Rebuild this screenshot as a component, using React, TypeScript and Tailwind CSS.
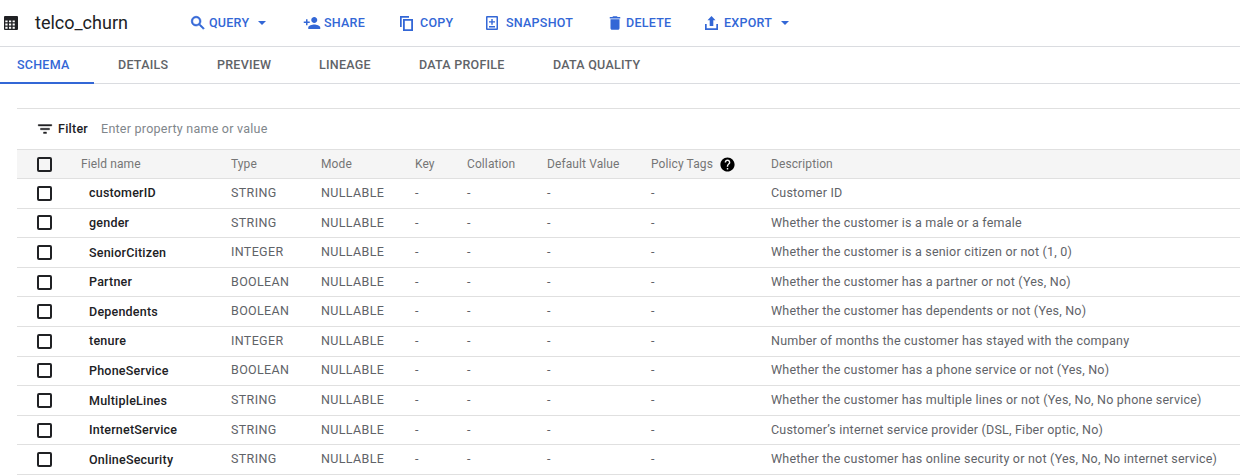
import React from "react";
import { MdPersonAdd, MdDelete, MdHelp } from "react-icons/md";

const font = { fontFamily: "Roboto, sans-serif" };

const rows = [
  ["customerID", "STRING", "Customer ID"],
  ["gender", "STRING", "Whether the customer is a male or a female"],
  ["SeniorCitizen", "INTEGER", "Whether the customer is a senior citizen or not (1, 0)"],
  ["Partner", "BOOLEAN", "Whether the customer has a partner or not (Yes, No)"],
  ["Dependents", "BOOLEAN", "Whether the customer has dependents or not (Yes, No)"],
  ["tenure", "INTEGER", "Number of months the customer has stayed with the company"],
  ["PhoneService", "BOOLEAN", "Whether the customer has a phone service or not (Yes, No)"],
  ["MultipleLines", "STRING", "Whether the customer has multiple lines or not (Yes, No, No phone service)"],
  ["InternetService", "STRING", "Customer’s internet service provider (DSL, Fiber optic, No)"],
  ["OnlineSecurity", "STRING", "Whether the customer has online security or not (Yes, No, No internet service)"],
];

const grid = "grid grid-cols-[64px_150px_90px_94px_52px_80px_104px_120px_1fr] items-center";

function Check() {
  return <span className="ml-5 block h-[15px] w-[15px] rounded-[2px] border-2 border-[#202124]" />;
}

function TableIcon() {
  return (
    <svg width="14" height="14" viewBox="0 0 14 14" fill="#202124">
      <path d="M1 0h12a1 1 0 0 1 1 1v12a1 1 0 0 1-1 1H1a1 1 0 0 1-1-1V1a1 1 0 0 1 1-1Zm.3 4.4v1.9h2.3V4.4Zm3.700 0v1.900h2.200V4.400Zm3.600 0v1.900h2.200V4.400ZM1.300 7.600v1.900h2.300V7.600Zm3.700 0v1.900h2.200V7.600Zm3.600 0v1.900h2.200V7.600ZM1.300 10.800v1.900h2.300v-1.900Zm3.700 0v1.900h2.200v-1.900Zm3.600 0v1.900h2.200v-1.900Z" fillRule="evenodd" />
    </svg>
  );
}

function SearchIcon() {
  return (
    <svg width="18" height="18" viewBox="0 0 24 24" fill="#3367d6" stroke="#3367d6" strokeWidth="0.8">
      <path d="M15.5 14h-.79l-.28-.27C15.41 12.59 16 11.11 16 9.5 16 5.91 13.09 3 9.5 3S3 5.91 3 9.5 5.91 16 9.5 16c1.61 0 3.09-.59 4.23-1.57l.27.28v.79l5 4.99L20.49 19l-4.99-5zm-6 0C7.01 14 5 11.99 5 9.5S7.01 5 9.5 5 14 7.01 14 9.5 11.99 14 9.5 14z" />
    </svg>
  );
}

function FilterIcon() {
  return (
    <svg width="18" height="18" viewBox="0 0 24 24" fill="#202124" stroke="#202124" strokeWidth="0.5">
      <path d="M10 18h4v-2h-4v2zM3 6v2h18V6H3zm3 7h12v-2H6v2z" />
    </svg>
  );
}

function Caret({ className }: { className: string }) {
  return (
    <svg width="8" height="4" viewBox="0 0 8 4" fill="currentColor" className={className}>
      <path d="M0 0h8L4 4Z" />
    </svg>
  );
}

function CopyIcon() {
  return (
    <svg width="13" height="15" viewBox="0 0 13 15" fill="#3367d6">
      <path d="M0 0h9v1.700H1.700V11H0Z" />
      <path fillRule="evenodd" d="M3 3h10v12H3Zm1.800 1.800v8.400h6.400V4.800Z" />
    </svg>
  );
}

function SnapshotIcon() {
  return (
    <svg width="12" height="14" viewBox="0 0 12 14" fill="#3367d6">
      <path fillRule="evenodd" d="M1 0h10a1 1 0 0 1 1 1v12a1 1 0 0 1-1 1H1a1 1 0 0 1-1-1V1a1 1 0 0 1 1-1Zm.5 1.500v11h9v-11Z" />
      <path d="M5.300 3h1.400v2.200H9v1.300H6.700v2.200H5.300V6.500H3V5.200h2.300ZM3 10h6v1.400H3Z" />
    </svg>
  );
}

function ExportIcon() {
  return (
    <svg width="13" height="14" viewBox="0 0 13 14" fill="#3367d6">
      <path d="M6.500 0l4 4.200H8.300V10H4.700V4.200H2.500ZM0 8h1.700v4.300h9.600V8H13v6H0Z" />
    </svg>
  );
}

function Action({ icon, label, caret, gap = "gap-[6px]" }: { icon: React.ReactNode; label: string; caret?: React.ReactNode; gap?: string }) {
  return (
    <div className={`flex items-center ${gap} text-[12.5px] font-medium tracking-[0.25px] text-[#3367d6]`}>
      {icon}
      <span>{label}</span>
      {caret}
    </div>
  );
}

export default function App() {
  return (
    <div className="h-[476px] w-[1240px] overflow-hidden bg-white" style={font}>
      <div className="flex h-[47px] items-center border-b border-[#dadce0]">
        <div className="ml-[4px] w-[31px]"><TableIcon /></div>
        <div className="w-[154px] text-[18px] leading-none text-[#202124]">telco_churn</div>
        <div className="w-[114px]"><Action icon={<SearchIcon />} label="QUERY" caret={<Caret className="ml-[7px]" />} gap="gap-[2px]" /></div>
        <div className="w-[97px]"><Action icon={<MdPersonAdd size={18} />} label="SHARE" gap="gap-[3px]" /></div>
        <div className="w-[86px]"><Action icon={<CopyIcon />} label="COPY" gap="gap-[7px]" /></div>
        <div className="w-[120px]"><Action icon={<SnapshotIcon />} label="SNAPSHOT" gap="gap-[8px]" /></div>
        <div className="w-[99px]"><Action icon={<MdDelete size={18} />} label="DELETE" gap="gap-[2px]" /></div>
        <Action icon={<ExportIcon />} label="EXPORT" caret={<Caret className="ml-[3px]" />} gap="gap-[6px]" />
      </div>

      <div className="flex h-[37px] border-b border-[#dadce0] text-[12.5px] font-medium tracking-[0.25px] text-[#5f6368]">
        <div className="flex h-[37px] w-[94px] items-center border-b-2 border-[#3367d6] pl-[17px] pt-[2px] text-[#3367d6]">SCHEMA</div>
        <div className="flex w-[99px] items-center pl-[24px]">DETAILS</div>
        <div className="flex w-[102px] items-center pl-[24px]">PREVIEW</div>
        <div className="flex w-[100px] items-center pl-[24px]">LINEAGE</div>
        <div className="flex w-[134px] items-center pl-[24px]">DATA PROFILE</div>
        <div className="flex items-center pl-[24px]">DATA QUALITY</div>
      </div>

      <div className="ml-[17px] mt-[24px]">
        <div className="flex h-[41px] items-center border-t border-[#e0e0e0] pl-[19px]">
          <FilterIcon />
          <span className="ml-[4px] text-[12.5px] font-medium tracking-[0.25px] text-[#202124]">Filter</span>
          <span className="ml-[13px] text-[12.5px] tracking-[0.24px] text-[#80868b]">Enter property name or value</span>
        </div>

        <div className={`${grid} h-[30px] border-y border-[#e0e0e0] bg-[#f5f5f5] text-[12px] tracking-[0.1px] text-[#757575]`}>
          <Check />
          <div>Field name</div>
          <div>Type</div>
          <div>Mode</div>
          <div>Key</div>
          <div>Collation</div>
          <div>Default Value</div>
          <div className="flex items-center gap-[6px]">Policy Tags <MdHelp size={17} className="text-black" /></div>
          <div>Description</div>
        </div>

        {rows.map(([name, type, desc]) => (
          <div key={name} className={`${grid} h-[29.6px] border-b border-[#e0e0e0] text-[12.5px] tracking-[0.215px] text-[#5f6368]`}>
            <Check />
            <div className="pl-2 pt-[1px] font-medium text-[#202124]">{name}</div>
            <div className="tracking-[0.35px]">{type}</div>
            <div className="tracking-[0.35px]">NULLABLE</div>
            <div>-</div>
            <div>-</div>
            <div>-</div>
            <div>-</div>
            <div>{desc}</div>
          </div>
        ))}
      </div>
    </div>
  );
}
